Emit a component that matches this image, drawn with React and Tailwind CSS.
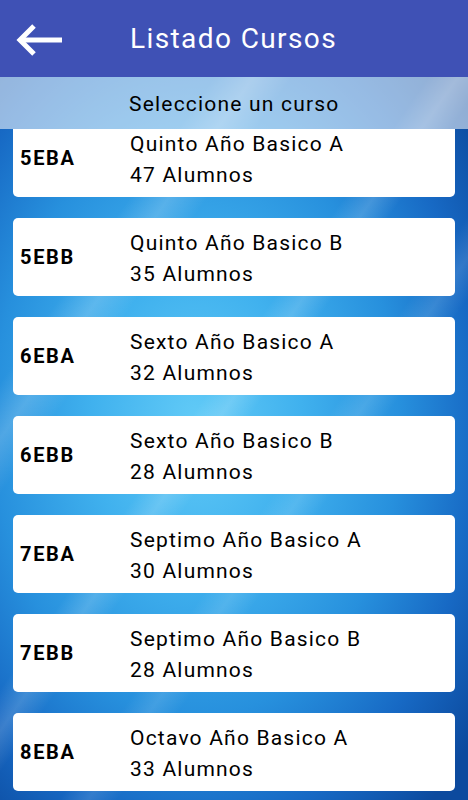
import React from "react";

const cursos = [
  { code: "5EBA", name: "Quinto Año Basico A", n: 47 },
  { code: "5EBB", name: "Quinto Año Basico B", n: 35 },
  { code: "6EBA", name: "Sexto Año Basico A", n: 32 },
  { code: "6EBB", name: "Sexto Año Basico B", n: 28 },
  { code: "7EBA", name: "Septimo Año Basico A", n: 30 },
  { code: "7EBB", name: "Septimo Año Basico B", n: 28 },
  { code: "8EBA", name: "Octavo Año Basico A", n: 33 },
];

export default function App() {
  return (
    <div className="w-[468px] h-[800px] flex flex-col overflow-hidden font-['Roboto',sans-serif]">
      <header className="h-[77px] shrink-0 bg-[#3f51b5] flex items-center">
        <svg width="66" height="40" viewBox="0 0 66 40" className="ml-[12px] mt-[2px]">
          <path d="M8 20 H50" stroke="white" strokeWidth="5" fill="none" />
          <path d="M22 6 L8 20 L22 34" stroke="white" strokeWidth="5" fill="none" strokeLinejoin="miter" />
        </svg>
        <h1 className="ml-[52px] text-white text-[28px] leading-none tracking-[1.4px]">Listado Cursos</h1>
      </header>
      <div className="flex-1 flex flex-col relative overflow-hidden bg-[radial-gradient(ellipse_75%_70%_at_42%_48%,#62cbf7_0%,#40b1ee_30%,#2790dd_58%,#1769c4_80%,#0c4a9e_100%)]">
        <div className="absolute inset-0 bg-[linear-gradient(125deg,transparent_0%,transparent_22%,rgba(255,255,255,0.18)_26%,transparent_30%,transparent_44%,rgba(255,255,255,0.16)_47%,transparent_50%,transparent_58%,rgba(255,255,255,0.12)_61%,transparent_64%)]" />
        <div className="relative z-10 h-[52px] shrink-0 bg-white/55 flex items-center pl-[129px] pt-[3px] text-[21px] tracking-[1.2px] text-black">
          Seleccione un curso
        </div>
        <div className="relative flex-1 overflow-hidden">
          <div className="mt-[-10px] flex flex-col gap-[21px] px-[13px]">
            {cursos.map((c) => (
              <div key={c.code} className="h-[78px] bg-white rounded-[5px] flex items-center">
                <div className="w-[117px] pl-[7px] font-bold text-[20px] tracking-[1.7px] text-black">{c.code}</div>
                <div className="flex flex-col pt-[4px] text-[21px] leading-[31px] tracking-[1.2px] text-black">
                  <span>{c.name}</span>
                  <span>{c.n} Alumnos</span>
                </div>
              </div>
            ))}
          </div>
        </div>
      </div>
    </div>
  );
}
